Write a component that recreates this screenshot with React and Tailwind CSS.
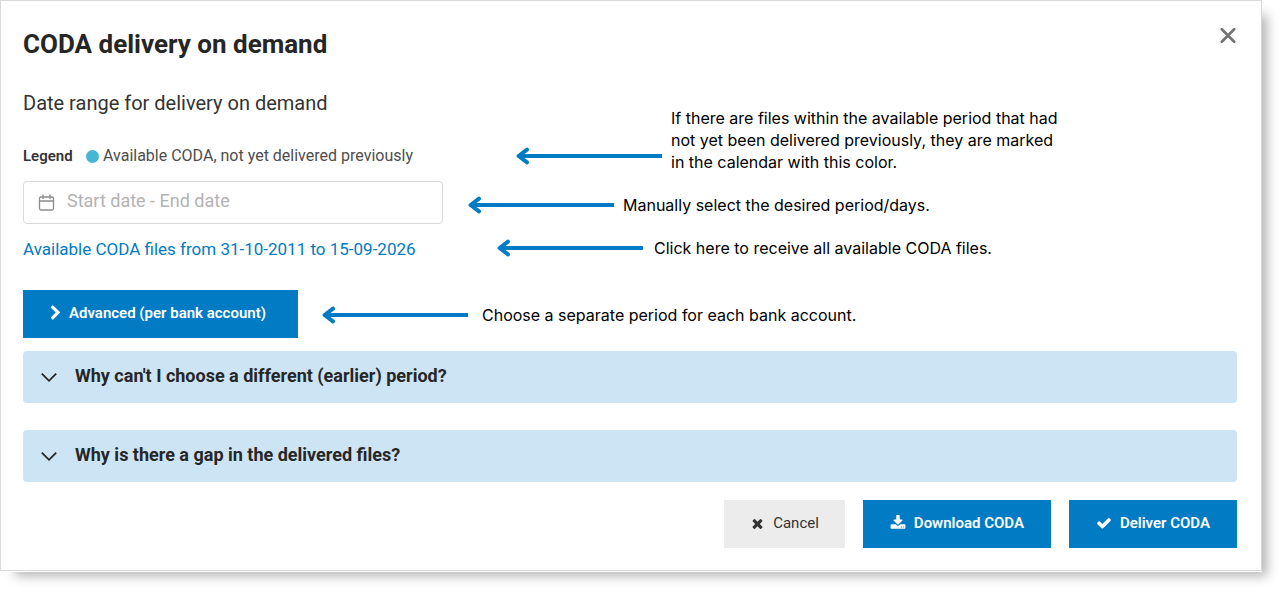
import React, { useState } from "react";

const Fa = ({ d, width, height, viewBox = "0 0 1792 1792" }) => (
  <svg width={width} height={height} viewBox={viewBox} fill="currentColor" aria-hidden="true">
    <path d={d} />
  </svg>
);

const icons = {
  chevron:
    "M1363 877l-742 742q-19 19-45 19t-45-19l-166-166q-19-19-19-45t19-45l531-531-531-531q-19-19-19-45t19-45l166-166q19-19 45-19t45 19l742 742q19 19 19 45t-19 45z",
  times:
    "M1490 1322q0 40-28 68l-136 136q-28 28-68 28t-68-28l-294-294-294 294q-28 28-68 28t-68-28l-136-136q-28-28-28-68t28-68l294-294-294-294q-28-28-28-68t28-68l136-136q28-28 68-28t68 28l294 294 294-294q28-28 68-28t68 28l136 136q28 28 28 68t-28 68l-294 294 294 294q28 28 28 68z",
  download:
    "M1344 1344q0-26-19-45t-45-19-45 19-19 45 19 45 45 19 45-19 19-45zm256 0q0-26-19-45t-45-19-45 19-19 45 19 45 45 19 45-19 19-45zm128-224v320q0 40-28 68t-68 28h-1472q-40 0-68-28t-28-68v-320q0-40 28-68t68-28h465l135 136q58 56 136 56t136-56l136-136h464q40 0 68 28t28 68zm-325-569q17 41-14 70l-448 448q-18 19-45 19t-45-19l-448-448q-31-29-14-70 17-39 59-39h256v-448q0-26 19-45t45-19h256q26 0 45 19t19 45v448h256q42 0 59 39z",
  check:
    "M1671 566q0 40-28 68l-724 724-136 136q-28 28-68 28t-68-28l-136-136-362-362q-28-28-28-68t28-68l136-136q28-28 68-28t68 28l294 295 656-657q28-28 68-28t68 28l136 136q28 28 28 68z",
};

const Arrow = () => (
  <svg
    width="146"
    height="18"
    viewBox="0 0 146 18"
    fill="none"
    stroke="#007bc4"
    className="shrink-0"
    aria-hidden="true"
  >
    <path d="M3 9H146" strokeWidth="4" />
    <path d="M11 2.6L2.6 9L11 15.4" strokeWidth="4" strokeLinecap="round" strokeLinejoin="round" />
  </svg>
);

const Note = ({ children, className }) => (
  <div className={`flex items-center ${className}`}>
    <Arrow />
    <p className="font-['Inter','Noto_Sans',sans-serif] text-base leading-[22px] text-black">
      {children}
    </p>
  </div>
);

const Question = ({ title }) => {
  const [open, setOpen] = useState(false);
  return (
    <button
      type="button"
      aria-expanded={open}
      onClick={() => setOpen(!open)}
      className="flex h-[52px] w-full items-center gap-[18px] rounded bg-[#cce4f4] pl-[18px] text-left text-lg font-bold text-[#262626]"
    >
      <svg width="16" height="16" viewBox="0 0 16 16" fill="none" stroke="currentColor" strokeWidth="1.8" aria-hidden="true">
        <path d="M0.8 4.6L8 11.8L15.2 4.6" />
      </svg>
      <span className="pb-0.5">{title}</span>
    </button>
  );
};

const PrimaryButton = ({ className = "", children }) => (
  <button
    type="button"
    className={`flex h-12 items-center gap-2 bg-[#007bc4] px-[27px] pb-0.5 text-[15px] font-semibold text-white ${className}`}
  >
    {children}
  </button>
);

export default function App() {
  const [range, setRange] = useState("");

  return (
    <div className="bg-white pb-6 pr-[23px] font-['Roboto','Noto_Sans',sans-serif] text-[#333]">
      <section
        aria-labelledby="title"
        className="border border-[#d9d9d9] bg-white pb-[22px] pl-[22px] pr-6 pt-[26px] shadow-[0_1px_0_#fff,10px_10px_11px_-5px_rgba(0,0,0,0.3)]"
      >
        <header className="flex items-start justify-between">
          <h1 id="title" className="text-[26px] font-bold leading-[34px] text-[#262626]">
            CODA delivery on demand
          </h1>
          <button type="button" aria-label="Close" className="text-[#737373]">
            <svg width="18" height="18" viewBox="0 0 18 18" fill="none" stroke="currentColor" strokeWidth="2.7" strokeLinecap="round">
              <path d="M2.8 2.3L15.2 14.7M15.2 2.3L2.8 14.7" />
            </svg>
          </button>
        </header>

        <div className="mt-7 flex items-end">
          <div className="w-[493px] shrink-0">
            <h2 className="text-xl leading-7 text-[#333]">Date range for delivery on demand</h2>
            <div className="flex items-center pb-[7px] pt-[29px] leading-5 text-[#4d4d4d]">
              <span className="w-[63px] text-[15px] font-semibold text-[#333]">Legend</span>
              <span className="mr-1 size-[13px] rounded-full bg-[#46b6d2]"></span>
              <span className="text-base leading-5">Available CODA, not yet delivered previously</span>
            </div>
          </div>
          <div className="flex items-end gap-[9px]">
            <div className="pb-2">
              <Arrow />
            </div>
            <p className="max-w-[396px] font-['Inter','Noto_Sans',sans-serif] text-base leading-[22px] text-black">
              If there are files within the available period that had not yet been delivered
              previously, they are marked in the calendar with this color.
            </p>
          </div>
        </div>

        <div className="mt-2 flex items-center">
          <div className="mr-[25px] flex h-[43px] w-[420px] items-center rounded border border-[#d9d9d9] pl-[14px]">
            <svg width="17" height="17" viewBox="0 0 17 17" fill="none" stroke="#8c8c8c" strokeWidth="1.3" strokeLinecap="round" aria-hidden="true">
              <rect x="1.5" y="3" width="14" height="13" rx="1.5" />
              <path d="M1.5 7H15.5M5 1V4.6M12 1V4.6" />
            </svg>
            <input
              aria-label="Start date - End date"
              className="ml-3 min-w-0 flex-1 pb-1 text-lg leading-6 outline-none placeholder:text-[#b3b3b3]"
              placeholder="Start date - End date"
              value={range}
              onChange={(e) => setRange(e.target.value)}
            />
          </div>
          <Note className="gap-[9px] pt-1">Manually select the desired period/days.</Note>
        </div>

        <div className="mt-[11px] flex items-center">
          <div className="w-[474px] shrink-0 pt-0.5">
            <a href="#all" className="block text-[17px] leading-6 text-[#007bc4]">
              Available CODA files from 31-10-2011 to 15-09-2026
            </a>
          </div>
          <Note className="gap-[11px]">Click here to receive all available CODA files.</Note>
        </div>

        <div className="mt-[29px] flex items-center gap-6">
          <PrimaryButton className="min-w-[275px]">
            <Fa d={icons.chevron} width={11} height={16} viewBox="256 0 1232 1792" />
            Advanced (per bank account)
          </PrimaryButton>
          <Note className="gap-[14px] pt-0.5">Choose a separate period for each bank account.</Note>
        </div>

        <div className="mt-[13px] flex flex-col gap-[27px]">
          <Question title="Why can't I choose a different (earlier) period?" />
          <Question title="Why is there a gap in the delivered files?" />
        </div>

        <footer className="mt-[18px] flex justify-end gap-[18px]">
          <button
            type="button"
            className="flex h-12 items-center gap-2 bg-[#ececec] px-[26px] pb-0.5 text-[15px] text-[#333]"
          >
            <Fa d={icons.times} width={15} height={15} />
            Cancel
          </button>
          <PrimaryButton>
            <Fa d={icons.download} width={16} height={16} />
            Download CODA
          </PrimaryButton>
          <PrimaryButton>
            <Fa d={icons.check} width={16} height={16} />
            Deliver CODA
          </PrimaryButton>
        </footer>
      </section>
    </div>
  );
}
